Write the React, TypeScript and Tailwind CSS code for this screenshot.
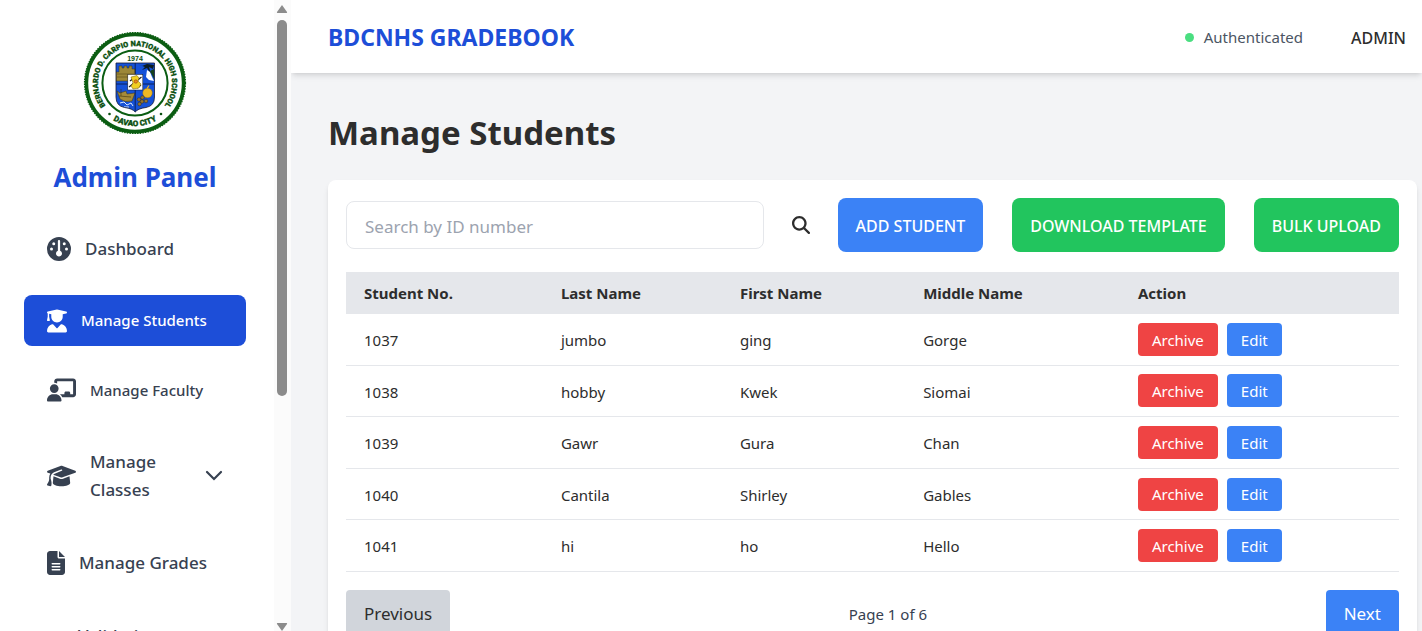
import React from "react";
import {
  FaChalkboardUser,
  FaFileLines,
  FaGauge,
  FaGraduationCap,
  FaMagnifyingGlass,
  FaUserGraduate,
} from "react-icons/fa6";

const students = [
  { id: "1037", last: "jumbo", first: "ging", middle: "Gorge" },
  { id: "1038", last: "hobby", first: "Kwek", middle: "Siomai" },
  { id: "1039", last: "Gawr", first: "Gura", middle: "Chan" },
  { id: "1040", last: "Cantila", first: "Shirley", middle: "Gables" },
  { id: "1041", last: "hi", first: "ho", middle: "Hello" },
];

function SchoolSeal() {
  return (
    <svg viewBox="0 0 104 104" className="size-[104px]" role="img" aria-label="School seal">
      <defs>
        <path id="seal-top" d="M24.800 77.200 A37 37 0 1 1 79.200 77.200" />
        <path id="seal-bottom" d="M8.800 52 A43.200 43.200 0 0 0 95.200 52" />
        <clipPath id="shield">
          <path d="M33 32 H71.500 V66 Q71.500 75 63 76.500 Q55 77.500 52.200 81 Q49.500 77.500 41.500 76.500 Q33 75 33 66Z" />
        </clipPath>
      </defs>
      <circle cx="52" cy="52" r="48.600" fill="#fff" stroke="#0b5d12" strokeWidth="3.600" />
      <circle cx="52" cy="52" r="50.400" fill="none" stroke="#0b5d12" strokeWidth="1.400" strokeDasharray="1.500 1.100" />
      <circle cx="52" cy="52" r="32.600" fill="#fff" stroke="#0b5d12" strokeWidth="2" />
      <g fill="#0a4f10" stroke="#0a4f10" strokeWidth=".3" fontFamily="Roboto, 'Liberation Sans', sans-serif" fontWeight="900">
        <text fontSize="7.400">
          <textPath href="#seal-top" startOffset="50%" textAnchor="middle">
            BERNARDO D. CARPIO NATIONAL HIGH SCHOOL
          </textPath>
        </text>
        <text fontSize="8">
          <textPath href="#seal-bottom" startOffset="50%" textAnchor="middle">
            DAVAO CITY
          </textPath>
        </text>
      </g>
      <text x="52" y="30" fontSize="7" fontWeight="700" textAnchor="middle" fill="#0a4f10" fontFamily="'Liberation Sans', sans-serif">
        1974
      </text>
      <circle cx="26.500" cy="83" r="1.300" fill="#0a4f10" />
      <circle cx="78" cy="83" r="1.300" fill="#0a4f10" />
      <g clipPath="url(#shield)">
        <rect x="32" y="31" width="41" height="52" fill="#1551d8" />
        {/* fortress */}
        <path d="M33 41 H36 V35 H39 V37 H41 V35 H44 V37 H46 V35 H49 V38 H52 V50 H33Z" fill="#9c8738" stroke="#3a3413" strokeWidth=".5" />
        <path d="M34 43 H51 M34 46 H46" stroke="#5a4c1a" strokeWidth=".6" />
        {/* eagle and palm */}
        <path d="M54 33 L59 35 L64 33 L71 34 L70 38 L66 36 L68 43 L64 37 L59 39 L62 36Z" fill="#0c1c22" />
        <path d="M64 39 L67 41 L69 46 L71 50 L66 49 L63 46Z" fill="#fff" />
        <path d="M67 40 L71 38 V48 Z" fill="#14401c" />
        {/* galleon */}
        <path d="M34 60 L37 62 L43 60 L44 63 L52 62 L49 70 Q42 72 37 68Z" fill="#a58b3a" stroke="#40360f" strokeWidth=".5" />
        <path d="M38 58 V65 M36 65 L48 66" stroke="#40360f" strokeWidth=".6" />
        <path d="M37 72 L41 71 L44 74 L48 72 L50 75 M41 76 L46 76" fill="none" stroke="#d9e8ff" strokeWidth="1" />
        {/* gold fruit and coins */}
        <circle cx="64.500" cy="62" r="4.800" fill="#efb824" stroke="#8a6410" strokeWidth=".4" />
        <path d="M64 57.500 L66 54.500" stroke="#efb824" strokeWidth="1.200" />
        <g fill="#94742d" stroke="#2d230a" strokeWidth=".4">
          <circle cx="56" cy="68.500" r="1.800" />
          <circle cx="59.500" cy="66.500" r="1.800" />
          <circle cx="59" cy="70.500" r="1.800" />
          <circle cx="63" cy="70" r="1.800" />
          <circle cx="56.500" cy="73" r="1.800" />
        </g>
        <path d="M52.200 31 V82 M32 53 H72" stroke="#08153e" strokeWidth=".8" />
        {/* centre emblem */}
        <rect x="44.800" y="43.500" width="15" height="15.500" fill="#fff" stroke="#1a1a1a" strokeWidth=".5" />
        <path d="M46 56 L58.500 46 M47 50 L51 47 M54 57 L58 54" stroke="#222" strokeWidth="1.300" />
        <path d="M48 46 L54 44.500 L56 47 L55 50 L58 53 L56 57 L50 58 L48 55 L50 52Z" fill="#f0cf22" stroke="#6a5712" strokeWidth=".5" />
        <circle cx="52.800" cy="50.500" r="1.700" fill="#e58a1c" stroke="#9c3c10" strokeWidth=".6" />
      </g>
      <path
        d="M33 32 H71.500 V66 Q71.500 75 63 76.500 Q55 77.500 52.200 81 Q49.500 77.500 41.500 76.500 Q33 75 33 66Z"
        fill="none"
        stroke="#151b33"
        strokeWidth=".8"
      />
    </svg>
  );
}

function Sidebar() {
  return (
    <aside className="flex h-screen w-[291px] shrink-0 overflow-hidden bg-white">
      <div className="flex min-w-0 flex-1 flex-col overflow-hidden pt-[31px] pr-7 pl-6 text-[#374151]">
        <div className="flex shrink-0 flex-col items-center">
          <SchoolSeal />
          <h2 className="mt-6 text-[26px] leading-9 font-bold text-[#1d4ed8]">Admin Panel</h2>
        </div>
        <nav className="mt-[27px] flex shrink-0 flex-col text-[17px] font-medium">
          <a href="#dashboard" className="flex h-[54px] items-center gap-3.5 px-[23px]">
            <FaGauge className="size-6 shrink-0" />
            Dashboard
          </a>
          <a
            href="#students"
            className="mt-[19px] flex h-[51px] items-center gap-3.5 rounded-lg bg-[#1d4ed8] px-[23px] text-[15px] text-white"
          >
            <FaUserGraduate className="h-6 w-5 shrink-0" />
            Manage Students
          </a>
          <a href="#faculty" className="mt-[17px] flex h-[54px] items-center gap-3.5 px-[23px] text-[15px]">
            <FaChalkboardUser className="h-6 w-[29px] shrink-0" />
            Manage Faculty
          </a>
          <button type="button" className="mt-[18px] flex h-[82px] items-center gap-3.5 px-[23px] text-left leading-7">
            <FaGraduationCap className="h-6 w-[29px] shrink-0" />
            <span className="flex-1">Manage Classes</span>
            <svg viewBox="0 0 18 12" className="h-3 w-[18px] shrink-0" fill="none" stroke="currentColor" strokeWidth="2.200" strokeLinecap="round">
              <path d="M2 2 L9 9 L16 2" />
            </svg>
          </button>
          <a href="#grades" className="mt-[17px] flex h-[58px] items-center gap-3.5 px-[23px]">
            <FaFileLines className="h-6 w-[18px] shrink-0" />
            Manage Grades
          </a>
          <a href="#validation" className="mt-[30px] pl-[54px] leading-7">
            Validation
          </a>
        </nav>
      </div>
      <div className="flex w-[17px] shrink-0 flex-col items-center bg-[#fbfbfb] pt-[5px] pr-0.5" aria-hidden="true">
        <svg viewBox="0 0 12 8" className="h-2 w-3 shrink-0 text-[#8b8b8b]" fill="currentColor">
          <path d="M6 0 L11 7 Q11.500 8 10.500 8 H1.500 Q.5 8 1 7Z" />
        </svg>
        <div className="mt-[7px] h-[376px] w-[10px] shrink rounded-full bg-[#8b8b8b]" />
        <svg viewBox="0 0 12 8" className="mt-auto h-2 w-3 shrink-0 text-[#8b8b8b]" fill="currentColor">
          <path d="M6 8 L11 1 Q11.500 0 10.500 0 H1.500 Q.5 0 1 1Z" />
        </svg>
      </div>
    </aside>
  );
}

const toolbarButton = "h-[54px] shrink-0 rounded-lg px-[18px] pt-0.5 text-base font-medium whitespace-nowrap text-white";
const rowButton = "h-[33px] rounded px-3.5 pt-px text-[15px] text-white";
const columns = ["Student No.", "Last Name", "First Name", "Middle Name", "Action"];

export default function App() {
  return (
    <div className="flex h-screen overflow-hidden bg-[#f3f4f6] font-['Noto_Sans','Open_Sans',sans-serif] text-[#2d2d2d]">
      <Sidebar />
      <div className="flex min-w-0 flex-1 flex-col overflow-hidden">
        <header className="flex h-[73px] shrink-0 items-center justify-between bg-white pt-0.5 pr-4 pl-[37px] shadow-md">
          <h1 className="text-[23px] font-bold text-[#1d4ed8]">BDCNHS GRADEBOOK</h1>
          <div className="flex items-center">
            <span className="mr-2.5 size-[9px] rounded-full bg-[#4ade80]" />
            <span className="mr-12 text-[15px] text-[#4b5563]">Authenticated</span>
            <span className="text-base font-medium">ADMIN</span>
          </div>
        </header>
        <main className="flex-1 pt-10 pr-[5px] pl-[37px]">
          <h2 className="text-[33px] leading-10 font-bold">Manage Students</h2>
          <section className="mt-[27px] rounded-lg bg-white px-[18px] pt-[18px] pb-6 shadow-md">
            <div className="flex items-center">
              <input
                type="text"
                aria-label="Search by ID number"
                placeholder="Search by ID number"
                className="h-12 min-w-0 flex-1 rounded-lg border border-[#e5e7eb] px-[18px] pt-0.5 text-[17px] placeholder:text-[#9ca3af]"
              />
              <button type="button" aria-label="Search" className="mx-7 shrink-0">
                <FaMagnifyingGlass className="size-[18px]" />
              </button>
              <button type="button" className={`${toolbarButton} bg-[#3b82f6]`}>ADD STUDENT</button>
              <button type="button" className={`${toolbarButton} ml-[29px] bg-[#22c55e]`}>DOWNLOAD TEMPLATE</button>
              <button type="button" className={`${toolbarButton} ml-[29px] bg-[#22c55e]`}>BULK UPLOAD</button>
            </div>
            <table className="mt-5 h-[300px] w-full table-fixed text-left text-[15px]">
              <colgroup>
                <col className="w-[18.7%]" />
                <col className="w-[17%]" />
                <col className="w-[17.4%]" />
                <col className="w-[20.4%]" />
                <col />
              </colgroup>
              <thead>
                <tr className="h-[42px] bg-[#e5e7eb]">
                  {columns.map((name) => (
                    <th key={name} className="px-[18px] font-bold">{name}</th>
                  ))}
                </tr>
              </thead>
              <tbody>
                {students.map((s) => (
                  <tr key={s.id} className="border-b border-[#e5e7eb]">
                    <td className="px-[18px] pt-0.5">{s.id}</td>
                    <td className="px-[18px] pt-0.5">{s.last}</td>
                    <td className="px-[18px] pt-0.5">{s.first}</td>
                    <td className="px-[18px] pt-0.5">{s.middle}</td>
                    <td className="px-[18px] py-2">
                      <div className="flex gap-[9px]">
                        <button type="button" className={`${rowButton} bg-[#ef4444]`}>Archive</button>
                        <button type="button" className={`${rowButton} bg-[#3b82f6]`}>Edit</button>
                      </div>
                    </td>
                  </tr>
                ))}
              </tbody>
            </table>
            <div className="mt-[18px] flex items-center justify-between">
              <button type="button" className="h-12 rounded bg-[#d1d5db] px-[18px] text-[17px]">Previous</button>
              <span className="text-[15px] text-[#374151]">Page 1 of 6</span>
              <button type="button" className="h-12 rounded bg-[#3b82f6] px-[18px] text-[17px] text-white">Next</button>
            </div>
          </section>
        </main>
      </div>
    </div>
  );
}
